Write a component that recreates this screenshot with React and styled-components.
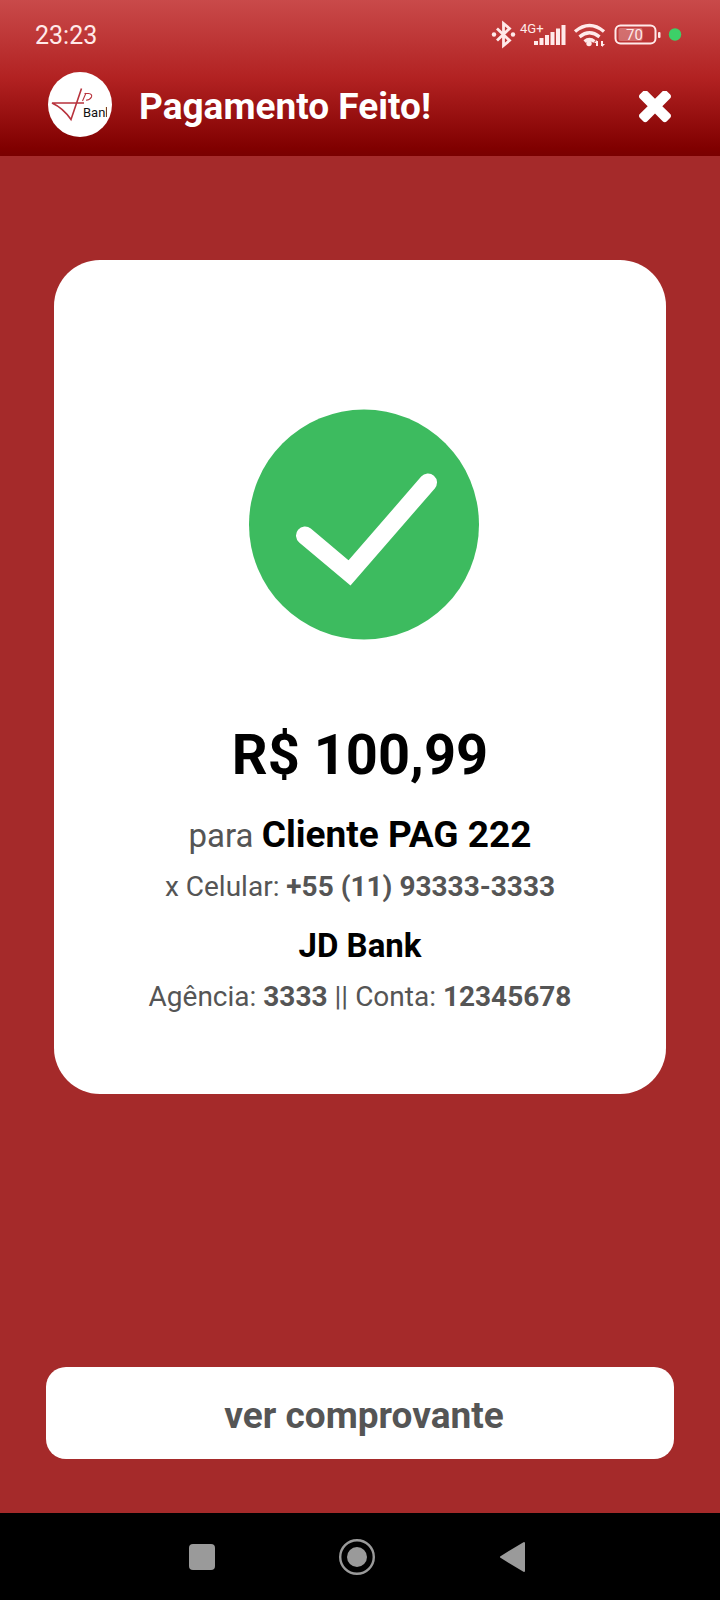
import React from "react";
import styled, { createGlobalStyle } from "styled-components";

const GlobalStyle = createGlobalStyle`
  *, *::before, *::after { box-sizing: border-box; }
  body {
    margin: 0;
    background: #a52a2a;
    font-family: Roboto, "Liberation Sans", sans-serif;
  }
`;

const Page = styled.div`
  min-height: 100vh;
  display: flex;
  flex-direction: column;
`;

const Header = styled.header`
  background: linear-gradient(180deg, #c94a4a 0%, #b22222 50%, #800000 95%, #7a0000 100%);
  color: #fff;
`;

const StatusBar = styled.div`
  display: flex;
  align-items: center;
  justify-content: space-between;
  height: 72px;
  padding: 0 36px 2px 35px;
  color: #ffeaea;
`;

const Clock = styled.time`
  padding-top: 2px;
  font-size: 25px;
  line-height: 28px;
`;

const StatusIcons = styled.svg`
  display: block;
  width: 194px;
  height: 30px;
`;

const TitleBar = styled.div`
  display: flex;
  align-items: center;
  height: 84px;
  padding: 0 48px 18px;
`;

const Logo = styled.svg`
  display: block;
  flex: none;
  width: 64px;
  height: 66px;
`;

const Title = styled.h1`
  flex: 1;
  margin: 0;
  padding: 4px 0 0 27px;
  font-size: 37px;
  line-height: 44px;
  font-weight: 700;
`;

const IconButton = styled.button`
  display: grid;
  place-items: center;
  padding: 0;
  border: 0;
  background: none;
  color: inherit;
  cursor: pointer;
`;

const CloseButton = styled(IconButton)`
  padding-top: 6px;
`;

const Main = styled.main`
  flex: 1;
  display: flex;
  flex-direction: column;
  justify-content: space-between;
  padding: 104px 46px 54px;
`;

const Card = styled.section`
  display: flex;
  flex-direction: column;
  align-items: center;
  margin: 0 8px;
  padding: 149px 24px 75px;
  border-radius: 46px;
  background: #fff;
  color: #555;
  text-align: center;
`;

const SuccessIcon = styled.svg`
  display: block;
  width: 238px;
  height: 232px;
`;

const Amount = styled.p`
  margin: 80px 0 0;
  color: #000;
  font-size: 56px;
  line-height: 68px;
  font-weight: 700;
`;

const sizes = {
  large: "37px",
  medium: "33px",
  small: "28px",
};

const Line = styled.p`
  margin: ${({ $gap }) => $gap}px 0 0;
  font-size: ${({ $size }) => sizes[$size]};
  line-height: 44px;
`;

const Strong = styled.strong`
  font-size: ${({ $size }) => ($size ? sizes[$size] : "inherit")};
  font-weight: 700;
  color: ${({ $dark }) => ($dark ? "#000" : "inherit")};
`;

const ReceiptButton = styled.button`
  height: 92px;
  padding: 6px 0 0 8px;
  border: 0;
  border-radius: 20px;
  background: #fff;
  color: #555;
  font: 700 37px/44px Roboto, "Liberation Sans", sans-serif;
  cursor: pointer;
`;

const SystemNav = styled.nav`
  display: flex;
  justify-content: center;
  gap: 117px;
  height: 87px;
  padding-right: 6px;
  background: #000;
  color: #9a9a9a;
`;

const NavIcon = styled.svg`
  display: block;
  width: 38px;
  height: 38px;
`;

export default function App() {
  return (
    <Page>
      <GlobalStyle />
      <Header>
        <StatusBar>
          <Clock>23:23</Clock>
          <StatusIcons viewBox="490 20 194 30" fill="currentColor" role="img" aria-label="Bluetooth, 4G+, Wi-Fi, 70%">
            <path d="M497 28.500l12.500 12-6 5V23.500l6 5-12.500 12" fill="none" stroke="currentColor" strokeWidth="2.800" />
            <circle cx="494" cy="34.500" r="2.200" />
            <circle cx="513" cy="34.500" r="2.200" />
            <text x="520" y="33" fontSize="13">4G+</text>
            <path d="M534 41h4v4h-4zM539.500 38h4v7h-4zM545 35h4v10h-4zM550.500 32h4v13h-4zM556 28.500h4V45h-4zM561.500 25h4v20h-4z" />
            <g fill="none" stroke="currentColor" strokeWidth="3.400">
              <path d="M575 31.500q14.500-12 29 0M579.500 36.800q10-8 20 0M584.500 41.500q5-4 10 0" />
            </g>
            <circle cx="589" cy="43.500" r="2.700" />
            <path d="M597 46v-5M602 41v5" stroke="currentColor" strokeWidth="2" />
            <path d="M594 43l3-3v3zM605 44l-3 3v-3z" />
            <rect x="615.500" y="25.500" width="40" height="18" rx="5" fill="none" stroke="currentColor" strokeWidth="2" />
            <rect x="618.500" y="28" width="24" height="13" rx="2" opacity=".3" />
            <text x="626" y="40" fontSize="15">70</text>
            <rect x="658" y="32" width="2.500" height="6" rx="1" />
            <circle cx="675" cy="34.500" r="6.200" fill="#3dd068" />
          </StatusIcons>
        </StatusBar>
        <TitleBar>
          <Logo viewBox="48 72 64 66" role="img" aria-label="JD Bank">
            <ellipse cx="80" cy="104.500" rx="32" ry="32.500" fill="#fff" />
            <g fill="none" stroke="#b8323c" strokeWidth="1.600">
              <path d="M81.500 88.500L71 119.500Q63 108 52 103H84" />
              <path d="M86 93l-3.500 8M84.500 93.500h4q4 .5 3 3.500-1.500 3-5.500 3.200" strokeWidth="1.100" />
            </g>
            <svg x="80" y="100" width="27" height="24" viewBox="0 0 27 24">
              <text x="3" y="16.500" fontSize="13" fill="#111">Bank</text>
            </svg>
          </Logo>
          <Title>Pagamento Feito!</Title>
          <CloseButton type="button" aria-label="Fechar">
            <svg width="34" height="34" viewBox="265 397 1262 1262" fill="currentColor">
              <path d="M1490 1322q0 40-28 68l-136 136q-28 28-68 28t-68-28l-294-294-294 294q-28 28-68 28t-68-28l-136-136q-28-28-28-68t28-68l294-294-294-294q-28-28-28-68t28-68l136-136q28-28 68-28t68 28l294 294 294-294q28-28 68-28t68 28l136 136q28 28 28 68t-28 68l-294 294 294 294q28 28 28 68z" />
            </svg>
          </CloseButton>
        </TitleBar>
      </Header>
      <Main>
        <Card>
          <SuccessIcon viewBox="241 409 238 232" role="img" aria-label="Pagamento concluído">
            <circle cx="364" cy="524.500" r="115" fill="#3dbb5f" />
            <path d="M305 535.500L349.500 573L428 482.500" fill="none" stroke="#fff" strokeWidth="18" strokeLinecap="round" />
          </SuccessIcon>
          <Amount>R$ 100,99</Amount>
          <Line $size="medium" $gap={24}>para <Strong $size="large" $dark>Cliente PAG 222</Strong></Line>
          <Line $size="small" $gap={7}>x Celular: <Strong>+55 (11) 93333-3333</Strong></Line>
          <Line $size="medium" $gap={15}><Strong $dark>JD Bank</Strong></Line>
          <Line $size="small" $gap={7}>Agência: <Strong>3333</Strong> || Conta: <Strong>12345678</Strong></Line>
        </Card>
        <ReceiptButton type="button">ver comprovante</ReceiptButton>
      </Main>
      <SystemNav aria-label="Sistema">
        <IconButton type="button" aria-label="Recentes">
          <NavIcon viewBox="0 0 38 38"><rect x="6" y="6" width="26" height="26" rx="4" fill="currentColor" /></NavIcon>
        </IconButton>
        <IconButton type="button" aria-label="Início">
          <NavIcon viewBox="0 0 38 38">
            <circle cx="19" cy="19" r="16.800" fill="none" stroke="currentColor" strokeWidth="2.400" />
            <circle cx="19" cy="19" r="10" fill="currentColor" />
          </NavIcon>
        </IconButton>
        <IconButton type="button" aria-label="Voltar">
          <NavIcon viewBox="0 0 38 38"><path d="M31 5v28L8 19z" fill="currentColor" stroke="currentColor" strokeWidth="2" strokeLinejoin="round" /></NavIcon>
        </IconButton>
      </SystemNav>
    </Page>
  );
}
